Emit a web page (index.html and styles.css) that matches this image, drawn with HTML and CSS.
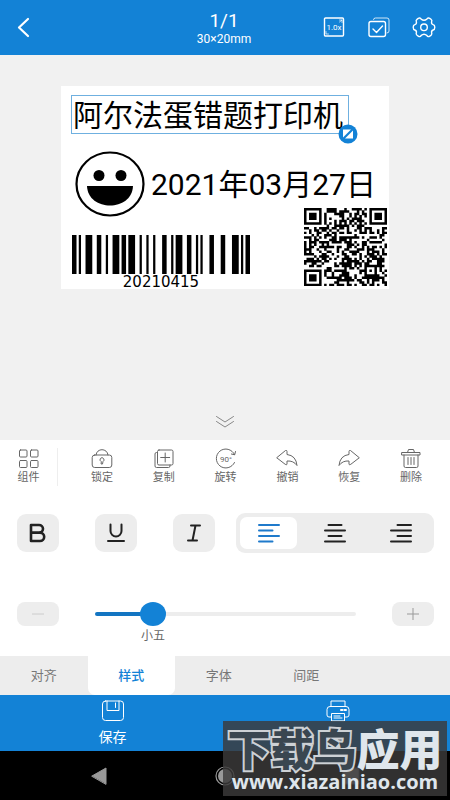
FILE: index.html
```html
<!DOCTYPE html>
<html lang="zh-CN">
<head>
<meta charset="utf-8">
<meta name="viewport" content="width=device-width, initial-scale=1">
<title>30×20mm</title>
<link rel="stylesheet" href="styles.css">
</head>
<body>
<header class="header">
  <button class="header-btn back" type="button" aria-label="返回">
    <svg width="24" height="24" viewBox="0 0 24 24"><path d="M16 3 7 11.500 16 20" stroke-width="2.200"/></svg>
  </button>
  <div class="heading">
    <h1 class="page-no">1/1</h1>
    <p class="page-size">30×20mm</p>
  </div>
  <div class="header-actions">
    <button class="header-btn" type="button" aria-label="缩放">
      <svg width="24" height="24" viewBox="0 0 24 24"><rect x="2.500" y="2" width="19" height="18" rx="1"/><path d="M17.500 6 20 4M17.500 4H20V6.500M4 15.500v2.500h2.500" stroke-width=".7"/><text class="zoom-text" x="12" y="14" text-anchor="middle">1.0x</text></svg>
    </button>
    <button class="header-btn" type="button" aria-label="多选">
      <svg width="24" height="24" viewBox="0 0 24 24"><path d="M6.500 3.500Q6.500 2 8.500 2H20q2 0 2 2v11q0 2-2 2" stroke-width="1" opacity=".8"/><rect x="2" y="5.500" width="16.500" height="15" rx="2"/><path d="m6 13 3.500 3.500 6-6.500"/></svg>
    </button>
    <button class="header-btn" type="button" aria-label="设置">
      <svg width="24" height="24" viewBox="0 0 24 24"><path d="M9 3Q8 1.300 6.300 2.400L5 3.300Q3.600 4.300 4.400 6Q4.800 8 2.800 8.600Q1.200 9 1.200 11.300Q1.200 13.600 2.800 14Q4.800 14.600 4.400 16.600Q3.600 18.300 5 19.300L6.300 20.200Q8 21.300 9 19.600Q12 17 15 19.600Q16 21.300 17.700 20.200L19 19.300Q20.400 18.300 19.600 16.600Q19.200 14.600 21.200 14Q22.800 13.600 22.800 11.300Q22.800 9 21.200 8.600Q19.200 8 19.600 6Q20.400 4.300 19 3.300L17.700 2.400Q16 1.300 15 3Q12 5.600 9 3Z"/><circle cx="12" cy="11.300" r="3.300"/></svg>
    </button>
  </div>
</header>

<main class="canvas">
  <div class="label">
    <div class="label-title">阿尔法蛋错题打印机
      <svg class="handle" width="20" height="20" viewBox="0 0 20 20"><circle class="handle-disc" cx="10" cy="10" r="9.500"/><path class="handle-mark" d="M5 5.500h8L5 13.500zM15 6.500v8H7z"/></svg>
    </div>
    <svg class="smiley" width="70" height="66" viewBox="0 0 70 66"><ellipse class="face" cx="35" cy="33" rx="33.500" ry="31.500"/><circle cx="24" cy="24.500" r="5.500"/><circle cx="46" cy="24.500" r="5.500"/><path d="M12 35H58C57 61 13 61 12 35Z"/></svg>
    <div class="label-date">2021年03月27日</div>
    <figure class="barcode">
      <svg class="bars" viewBox="0 0 79 10" preserveAspectRatio="none"><path d="M0 0h2v10H0zM3 0h1v10H3zM6 0h3v10H6zM11 0h2v10h-2zM15 0h1v10h-1zM18 0h3v10h-3zM22 0h2v10h-2zM25 0h3v10h-3zM30 0h1v10h-1zM33 0h1v10h-1zM36 0h1v10h-1zM40 0h2v10h-2zM44 0h1v10h-1zM46 0h3v10h-3zM51 0h2v10h-2zM55 0h1v10h-1zM57 0h1v10h-1zM61 0h2v10h-2zM66 0h2v10h-2zM71 0h3v10h-3zM75 0h1v10h-1zM77 0h2v10h-2z"/></svg>
      <figcaption>20210415</figcaption>
    </figure>
    <svg class="qr" viewBox="0 0 33 33" preserveAspectRatio="none"><path id="qr-modules"/></svg>
  </div>
  <button class="collapse" type="button" aria-label="收起">
    <svg width="20" height="14" viewBox="0 0 20 14"><path d="m1.500 1.500 8.500 5.500 8.500-5.500M1.500 6.500 10 12l8.500-5.500"/></svg>
  </button>
</main>

<nav class="toolbar" aria-label="编辑">
  <button class="tool tool-first" type="button">
    <svg width="22" height="22" viewBox="0 0 22 22"><rect x="1.500" y="2" width="7.500" height="7" rx="1"/><rect x="12.500" y="2" width="7.500" height="7" rx="1"/><rect x="1.500" y="12.500" width="7.500" height="7" rx="1"/><rect x="12.500" y="12.500" width="7.500" height="7" rx="1"/></svg>
    <span>组件</span>
  </button>
  <div class="tool-group">
    <button class="tool" type="button">
      <svg width="22" height="22" viewBox="0 0 22 22"><path d="M5 7C5.500-.2 16.500-.2 17 7"/><rect x="1.200" y="7" width="19.600" height="12.500" rx="2.500"/><path d="M10 13.500a2 2 0 1 1 2 0L11.500 16h-1z"/></svg>
      <span>锁定</span>
    </button>
    <button class="tool" type="button">
      <svg width="22" height="22" viewBox="0 0 22 22"><rect x="4.500" y="2" width="15.500" height="15" rx="1.500"/><path d="M4.500 4.500h-1q-1.500 0-1.500 1.500v12q0 1.500 1.500 1.500h12q1.500 0 1.500-1.500v-1M12.200 5v9M7.700 9.500h9"/></svg>
      <span>复制</span>
    </button>
    <button class="tool" type="button">
      <svg width="22" height="22" viewBox="0 0 22 22"><path d="M19.500 6.500A9.500 9.500 0 1 0 19.500 14.500M20.500 3.500l-.8 3.300-3.300-.8"/><text class="rotate-text" x="11" y="14" text-anchor="middle">90°</text></svg>
      <span>旋转</span>
    </button>
    <button class="tool" type="button">
      <svg width="22" height="22" viewBox="0 0 22 22"><path d="M1 9.500 9.500 2.500Q11 2 11 3.500V6.500Q20 7.500 21 17.500 17.500 12.500 11 13v3Q11 17.500 9.500 16.500Z"/></svg>
      <span>撤销</span>
    </button>
    <button class="tool" type="button">
      <svg width="22" height="22" viewBox="0 0 22 22"><path d="M21 9.500 12.500 2.500Q11 2 11 3.500V6.500Q2 7.500 1 17.500 4.500 12.500 11 13v3Q11 17.500 12.500 16.500Z"/></svg>
      <span>恢复</span>
    </button>
    <button class="tool" type="button">
      <svg width="22" height="22" viewBox="0 0 22 22"><path d="M2 4.500H20V7H2zM7.500 4.500 8.500 1.500h5l1 3M4 7V18q0 1.500 1.500 1.500h11Q18 19.500 18 18V7M8 9.500v7M11 9.500v7M14 9.500v7"/></svg>
      <span>删除</span>
    </button>
  </div>
</nav>

<section class="panel">
  <div class="format-row">
    <div class="format-btns">
      <button class="format-btn" type="button" aria-label="粗体"><svg width="20" height="20" viewBox="0 0 20 20"><path d="M3 2h8a4 3.800 0 0 1 0 7.600H3m8 0h1a4.200 4.200 0 0 1 0 8.400H3V2" stroke-width="2.600"/></svg></button>
      <button class="format-btn" type="button" aria-label="下划线"><svg width="20" height="20" viewBox="0 0 20 20"><path d="M4.500 1.500v6.500a5.500 5.500 0 0 0 11 0V1.500M2 18h16" stroke-width="2"/></svg></button>
      <button class="format-btn" type="button" aria-label="斜体"><svg width="20" height="20" viewBox="0 0 20 20"><path d="M7 2.500h9M4 17.500h9M11.500 2.500l-3 15" stroke-width="2"/></svg></button>
    </div>
    <div class="segmented" role="group" aria-label="对齐">
      <button class="segment active" type="button" aria-label="左对齐"><svg width="24" height="22" viewBox="0 0 24 22"><path d="M2 3h20M2 8.500h13.500M2 14h20M2 19.500h13.500"/></svg></button>
      <button class="segment" type="button" aria-label="居中"><svg width="24" height="22" viewBox="0 0 24 22"><path d="M5.500 3h13M2 8.500h20M5.500 14h13M2 19.500h20"/></svg></button>
      <button class="segment" type="button" aria-label="右对齐"><svg width="24" height="22" viewBox="0 0 24 22"><path d="M8.500 3H22M2 8.500h20M8.500 14H22M2 19.500h20"/></svg></button>
    </div>
  </div>
  <div class="size-row">
    <button class="step minus" type="button" aria-label="减小"><svg width="12" height="12" viewBox="0 0 12 12"><path d="M0 6h12"/></svg></button>
    <div class="slider">
      <input id="font-size" type="range" min="0" max="100" value="19" aria-label="字号">
      <output for="font-size">小五</output>
    </div>
    <button class="step" type="button" aria-label="增大"><svg width="12" height="12" viewBox="0 0 12 12"><path d="M0 6h12M6 0v12"/></svg></button>
  </div>
</section>

<nav class="tabs" aria-label="属性">
  <button class="tab" type="button">对齐</button>
  <button class="tab active" type="button">样式</button>
  <button class="tab" type="button">字体</button>
  <button class="tab" type="button">间距</button>
</nav>

<footer class="footer">
  <div class="actions">
    <button class="action" type="button">
      <svg width="26" height="24" viewBox="0 0 26 24"><rect x="2.500" y="2" width="21" height="19.500" rx="3"/><path d="M7 2v9.500h12V2M15.500 4v4.500"/></svg>
      <span>保存</span>
    </button>
    <button class="action" type="button">
      <svg width="26" height="24" viewBox="0 0 26 24"><path d="M6 7.500V2h14v5.500M6 18H4q-2 0-2-2v-5.500q0-3 3-3h16q3 0 3 3V16q0 2-2 2h-2M6.500 21.500v-7h13v7zM9 17h6M9 19h8"/><path d="M16 11h1.500M19.500 11H21" stroke-width="2"/></svg>
      <span>打印</span>
    </button>
  </div>
  <div class="system-nav">
    <button type="button" aria-label="后退"><svg width="20" height="20" viewBox="0 0 20 20"><path d="M3 10 17 2v16z" fill="#999" stroke="#999"/></svg></button>
    <button type="button" aria-label="主页"><svg width="20" height="20" viewBox="0 0 20 20"><circle cx="10" cy="10" r="7" fill="#999" stroke="none"/><circle cx="10" cy="10" r="9" stroke="#999" stroke-width="1.200"/></svg></button>
    <button type="button" aria-label="最近"><svg width="20" height="20" viewBox="0 0 20 20"><rect x="2" y="2" width="16" height="16" fill="#999"/></svg></button>
  </div>
  <div class="watermark">
    <strong><span class="outlined">下载鸟</span>应用</strong>
    <span class="site">www.xiazainiao.com</span>
  </div>
</footer>
<script src="qr.js"></script>
</body>
</html>
```
FILE: styles.css
```css
* {
  box-sizing: border-box;
}

body {
  margin: 0;
  min-height: 100vh;
  display: flex;
  flex-direction: column;
  background: #fff;
  color: #666;
  font-family: Roboto, "Noto Sans CJK SC", sans-serif;
}

button {
  margin: 0;
  padding: 0;
  border: 0;
  background: none;
  color: inherit;
  font: inherit;
}

svg {
  display: block;
  fill: none;
  stroke: currentColor;
  stroke-linecap: round;
  stroke-linejoin: round;
}

.header {
  display: grid;
  grid-template-columns: 1fr auto 1fr;
  align-items: center;
  height: 55px;
  padding: 0 14px 0 12px;
  background: #1382d6;
  color: #fff;
}

.header svg {
  stroke-width: 1.4;
}

.heading {
  text-align: center;
}

.page-no {
  margin: 0;
  font-size: 19px;
  font-weight: 400;
  line-height: 22px;
}

.page-size {
  margin: 0;
  font-size: 12px;
  line-height: 14px;
}

.header-actions {
  display: flex;
  justify-content: flex-end;
  gap: 21px;
}

.zoom-text {
  fill: #fff;
  stroke: none;
  font-size: 8px;
}

.canvas {
  flex: 1;
  display: flex;
  flex-direction: column;
  justify-content: space-between;
  align-items: center;
  padding: 31px 0 11px;
  background: #f1f1f1;
}

/* The label is a free canvas: each component keeps its own place. */
.label {
  position: relative;
  width: 328px;
  height: 203px;
  background: #fff;
  color: #000;
}

.label svg {
  stroke: none;
  fill: #000;
}

.label-title {
  position: absolute;
  left: 10px;
  top: 9px;
  width: 278px;
  height: 39px;
  padding-left: 1px;
  border: 1px solid #6fb0e0;
  font-size: 30px;
  line-height: 40px;
  white-space: nowrap;
}

.label .handle {
  position: absolute;
  right: -10px;
  bottom: -11px;
}

.label .handle-disc {
  fill: #1382d6;
}

.label .handle-mark {
  fill: #fff;
}

.smiley {
  position: absolute;
  left: 14px;
  top: 65px;
}

.label .face {
  fill: none;
  stroke: #000;
  stroke-width: 2.2;
}

.label-date {
  position: absolute;
  left: 90px;
  top: 81px;
  font-size: 30px;
  line-height: 36px;
  white-space: nowrap;
}

.barcode {
  position: absolute;
  left: 11px;
  top: 149px;
  width: 178px;
  margin: 0;
}

.bars {
  width: 100%;
  height: 39px;
}

.barcode figcaption {
  font-family: "DejaVu Sans", sans-serif;
  font-size: 15px;
  line-height: 16px;
  text-align: center;
}

.qr {
  position: absolute;
  left: 243px;
  top: 122px;
  width: 83px;
  height: 78px;
}

.collapse {
  color: #888;
}

.toolbar {
  display: flex;
  align-items: center;
  height: 58px;
  padding: 0 8px 4px 0;
}

.tool-group {
  flex: 1;
  display: flex;
  padding-left: 13px;
}

.tool {
  flex: 1;
  display: flex;
  flex-direction: column;
  align-items: center;
  font-size: 11px;
  line-height: 16px;
}

.tool-first {
  flex: 0 0 58px;
  border-right: 1px solid #eee;
}

.rotate-text {
  fill: #666;
  stroke: none;
  font-size: 8px;
}

.panel {
  padding: 15px 16px 12px 17px;
}

.format-row {
  display: flex;
  align-items: center;
  gap: 21px;
}

.format-btns {
  display: flex;
  gap: 36px;
}

.format-btn {
  display: flex;
  align-items: center;
  justify-content: center;
  width: 42px;
  height: 38px;
  border-radius: 9px;
  background: #ededed;
  color: #222;
}

.segmented {
  flex: 1;
  display: flex;
  gap: 9px;
  height: 40px;
  padding: 4px;
  border-radius: 9px;
  background: #ededed;
}

.segment {
  flex: 1;
  display: flex;
  align-items: center;
  justify-content: center;
  border-radius: 7px;
  color: #222;
}

.segment svg {
  stroke-width: 2;
}

.segment.active {
  background: #fff;
  color: #1f7acb;
}

.size-row {
  display: flex;
  align-items: flex-start;
  gap: 36px;
  margin-top: 49px;
}

.step {
  display: flex;
  align-items: center;
  justify-content: center;
  width: 42px;
  height: 24px;
  border-radius: 8px;
  background: #ededed;
  color: #999;
}

.step.minus {
  color: #ccc;
}

.slider {
  flex: 1;
}

.slider input {
  display: block;
  width: 100%;
  height: 24px;
  margin: 0;
  appearance: none;
  background: none;
}

.slider input::-webkit-slider-runnable-track {
  height: 4px;
  border-radius: 2px;
  background: linear-gradient(to right, #1375c2 22%, #ededed 22%);
}

.slider input::-webkit-slider-thumb {
  appearance: none;
  width: 26px;
  height: 24px;
  margin-top: -10px;
  border-radius: 50%;
  background: #1382d6;
}

.slider output {
  display: block;
  margin-left: 46px;
  padding-top: 2px;
  font-size: 12px;
  line-height: 16px;
}

.tabs {
  display: flex;
  height: 39px;
  padding-right: 100px;
  background: #ededed;
}

.tab {
  flex: 1;
  color: #777;
  font-size: 13px;
  line-height: 20px;
}

.tab.active {
  border-radius: 0 0 7px 7px;
  background: #fff;
  color: #1382d6;
  font-weight: 500;
}

.footer {
  position: relative;
}

.actions {
  display: flex;
  height: 56px;
  background: #1382d6;
  color: #fff;
}

.action {
  flex: 1;
  display: flex;
  flex-direction: column;
  align-items: center;
  justify-content: center;
  gap: 4px;
  font-size: 14px;
  line-height: 20px;
}

.system-nav {
  display: flex;
  align-items: center;
  justify-content: space-around;
  height: 49px;
  padding: 0 36px;
  background: #000;
}

.watermark {
  position: absolute;
  right: 3px;
  bottom: 4px;
  width: 224px;
  height: 75px;
  padding-top: 9px;
  background: rgba(60, 58, 58, .82);
  color: #dfe6ec;
  font-weight: 700;
  text-align: center;
  white-space: nowrap;
}

.watermark strong {
  display: block;
  font-size: 43px;
  line-height: 42px;
}

.outlined {
  color: #3a4650;
  -webkit-text-stroke: 4px #cdd1d5;
  paint-order: stroke fill;
}

.site {
  display: block;
  font-family: "Open Sans", sans-serif;
  font-size: 20px;
  line-height: 20px;
}
```
FILE: qr.js
```js
// Draws the 33-module code: three finders, one alignment mark, timing lines and data.
const SIZE = 33;
let seed = 20210415;

function nextBit() {
  seed ^= seed << 13;
  seed ^= seed >>> 17;
  seed ^= seed << 5;
  return (seed >>> 9) % 2 === 0;
}

function ring(x, y, cx, cy) {
  return Math.max(Math.abs(x - cx), Math.abs(y - cy));
}

function isDark(x, y) {
  const data = nextBit();
  for (const [cx, cy] of [[3, 3], [29, 3], [3, 29]]) {
    const r = ring(x, y, cx, cy);
    if (r <= 4) return r !== 2 && r !== 4;
  }
  const r = ring(x, y, 26, 26);
  if (r <= 2) return r !== 1;
  if (x === 6) return y % 2 === 0;
  if (y === 6) return x % 2 === 0;
  return data;
}

let d = "";
for (let y = 0; y < SIZE; y++) {
  let x = 0;
  while (x < SIZE) {
    let run = 0;
    while (x + run < SIZE && isDark(x + run, y)) run++;
    if (run) d += `M${x} ${y}h${run}v1.05h-${run}z`;
    x += run + 1;
  }
}
document.getElementById("qr-modules").setAttribute("d", d);
```
